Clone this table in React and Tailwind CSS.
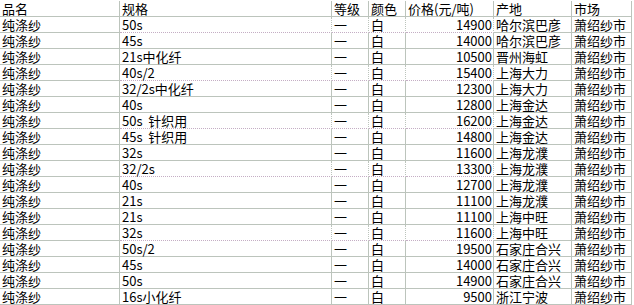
import React from "react";

const rows = [
  ["50s", "14900", "哈尔滨巴彦"],
  ["45s", "14000", "哈尔滨巴彦"],
  ["21s中化纤", "10500", "晋州海虹"],
  ["40s/2", "15400", "上海大力"],
  ["32/2s中化纤", "12300", "上海大力"],
  ["40s", "12800", "上海金达"],
  ["50s  针织用", "16200", "上海金达"],
  ["45s  针织用", "14800", "上海金达"],
  ["32s", "11600", "上海龙濮"],
  ["32/2s", "13300", "上海龙濮"],
  ["40s", "12700", "上海龙濮"],
  ["21s", "11100", "上海龙濮"],
  ["21s", "11100", "上海中旺"],
  ["32s", "11600", "上海中旺"],
  ["50s/2", "19500", "石家庄合兴"],
  ["45s", "14000", "石家庄合兴"],
  ["50s", "14900", "石家庄合兴"],
  ["16s小化纤", "9500", "浙江宁波"],
];

const solid = "border-b border-solid border-b-[#bcc4bc]";
const dotted = "border-b border-dotted border-b-[#c4aec4]";

// rows (index) whose middle-column bottom line is dotted
const dottedRows = new Set([0, 3, 6, 9, 13]);

function Cell({ w, children, right, bottom }) {
  return (
    <div
      className={`${w} shrink-0 h-full border-r border-r-[#bcc4bc] ${bottom} whitespace-pre leading-[15px] ${
        right ? "text-right pr-[1px]" : "pl-[2px]"
      }`}
    >
      {children}
    </div>
  );
}

function Row({ cells, header, idx }) {
  const b = !header && dottedRows.has(idx) ? dotted : solid;
  return (
    <div className={`flex ${header ? "h-[17px] pt-[1px]" : "h-[16px]"}`}>
      <Cell w="w-[120px]" bottom={solid}>{cells[0]}</Cell>
      <Cell w="w-[212px]" bottom={b}>{cells[1]}</Cell>
      <Cell w="w-[37px]" bottom={b}>{cells[2]}</Cell>
      <Cell w="w-[37px]" bottom={b}>{cells[3]}</Cell>
      <Cell w="w-[88px]" bottom={b} right={!header}>{cells[4]}</Cell>
      <Cell w="w-[78px]" bottom={solid}>{cells[5]}</Cell>
      <Cell w="w-[60px]" bottom={solid}>{cells[6]}</Cell>
    </div>
  );
}

export default function App() {
  return (
    <div
      className="w-[634px] h-[305px] bg-white text-black text-[13px] overflow-hidden"
      style={{ fontFamily: '"Noto Sans CJK SC", "Noto Sans", sans-serif' }}
    >
      <Row header cells={["品名", "规格", "等级", "颜色", "价格(元/吨)", "产地", "市场"]} />
      {rows.map((r, i) => (
        <Row key={i} idx={i} cells={["纯涤纱", r[0], "一", "白", r[1], r[2], "萧绍纱市"]} />
      ))}
    </div>
  );
}
